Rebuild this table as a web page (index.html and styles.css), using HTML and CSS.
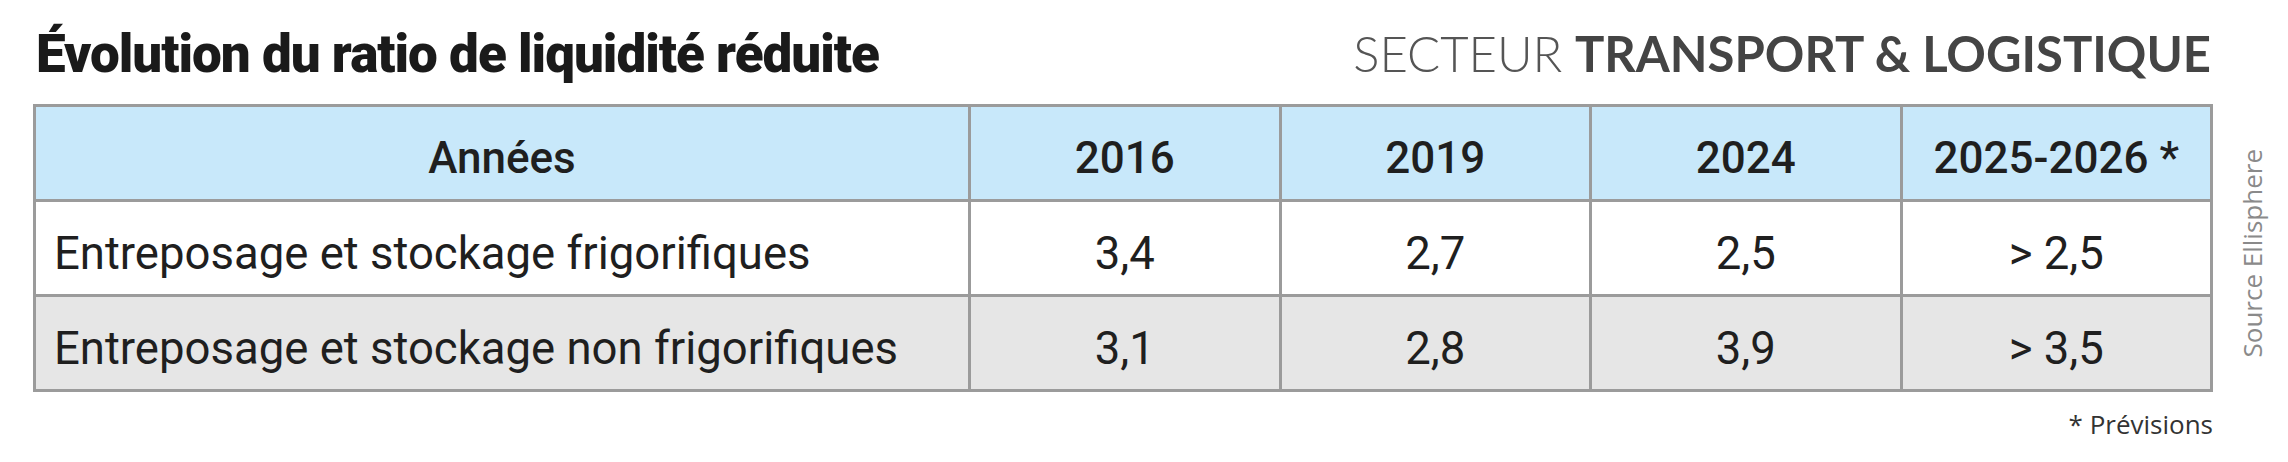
FILE: index.html
```html
<!DOCTYPE html>
<html lang="fr">
<head>
<meta charset="utf-8">
<title>Évolution du ratio de liquidité réduite</title>
<link rel="stylesheet" href="styles.css">
</head>
<body>
<div class="page">
  <div class="head">
    <h1 class="title">Évolution du ratio de liquidité réduite</h1>
    <div class="sector"><span class="sector-light">SECTEUR</span> <span class="sector-bold">TRANSPORT &amp; LOGISTIQUE</span></div>
  </div>
  <div class="main">
    <table class="ratio">
      <colgroup>
        <col class="c-label">
        <col class="c-val">
        <col class="c-val">
        <col class="c-val">
        <col class="c-val">
      </colgroup>
      <thead>
        <tr>
          <th>Années</th>
          <th>2016</th>
          <th>2019</th>
          <th>2024</th>
          <th>2025-2026 *</th>
        </tr>
      </thead>
      <tbody>
        <tr class="odd">
          <td class="label">Entreposage et stockage frigorifiques</td>
          <td>3,4</td>
          <td>2,7</td>
          <td>2,5</td>
          <td>&gt; 2,5</td>
        </tr>
        <tr class="even">
          <td class="label">Entreposage et stockage non frigorifiques</td>
          <td>3,1</td>
          <td>2,8</td>
          <td>3,9</td>
          <td>&gt; 3,5</td>
        </tr>
      </tbody>
    </table>
    <div class="source">Source Ellisphere</div>
  </div>
  <div class="note">* Prévisions</div>
</div>
</body>
</html>
```
FILE: styles.css
```css
* { box-sizing: border-box; }
html, body { margin: 0; padding: 0; background: #ffffff; }
body { font-family: "Roboto", "Liberation Sans", sans-serif; color: #1f1f1f; }

.page {
  padding: 22px 0 0 33px;
  width: 2288px;
  height: 462px;
}

.head {
  width: 2180px;
  display: flex;
  justify-content: space-between;
  align-items: baseline;
  padding: 0 2px 0 3px;
  height: 82px;
}

.title {
  margin: 0;
  font-family: "Roboto", "Liberation Sans", sans-serif;
  font-weight: 900;
  font-size: 53px;
  letter-spacing: -1px;
  color: #1a1a1a;
  line-height: 62px;
}

.sector {
  font-family: "Lato", "Liberation Sans", sans-serif;
  font-size: 49px;
  color: #555555;
  line-height: 62px;
}
.sector-light { font-weight: 300; }
.sector-bold { font-weight: 700; color: #444444; }

.main {
  display: flex;
  align-items: center;
  gap: 24px;
}

.ratio {
  width: 2180px;
  border-collapse: collapse;
  border: 3px solid #9b9b9b;
  table-layout: fixed;
}
.c-label { width: 935px; }

.ratio th, .ratio td {
  border: 3px solid #9b9b9b;
  height: 95px;
  padding: 10px 0 0 0;
  text-align: center;
  font-size: 45.5px;
  font-weight: 400;
  color: #1f1f1f;
}
.ratio thead tr { background: #c8e8fa; }
.ratio th { font-weight: 500; font-size: 44px; }
.ratio tr.odd { background: #ffffff; }
.ratio tr.even { background: #e6e6e6; }
.ratio td.label { text-align: left; padding-left: 18px; }

.source {
  writing-mode: vertical-rl;
  transform: rotate(180deg);
  font-family: "Open Sans", "DejaVu Sans", sans-serif;
  font-size: 26px;
  color: #8a8a8a;
  line-height: 30px;
  margin-top: 10px;
}

.note {
  width: 2180px;
  text-align: right;
  font-family: "Open Sans", "DejaVu Sans", sans-serif;
  font-size: 26px;
  color: #333333;
  padding-top: 14px;
}
```
